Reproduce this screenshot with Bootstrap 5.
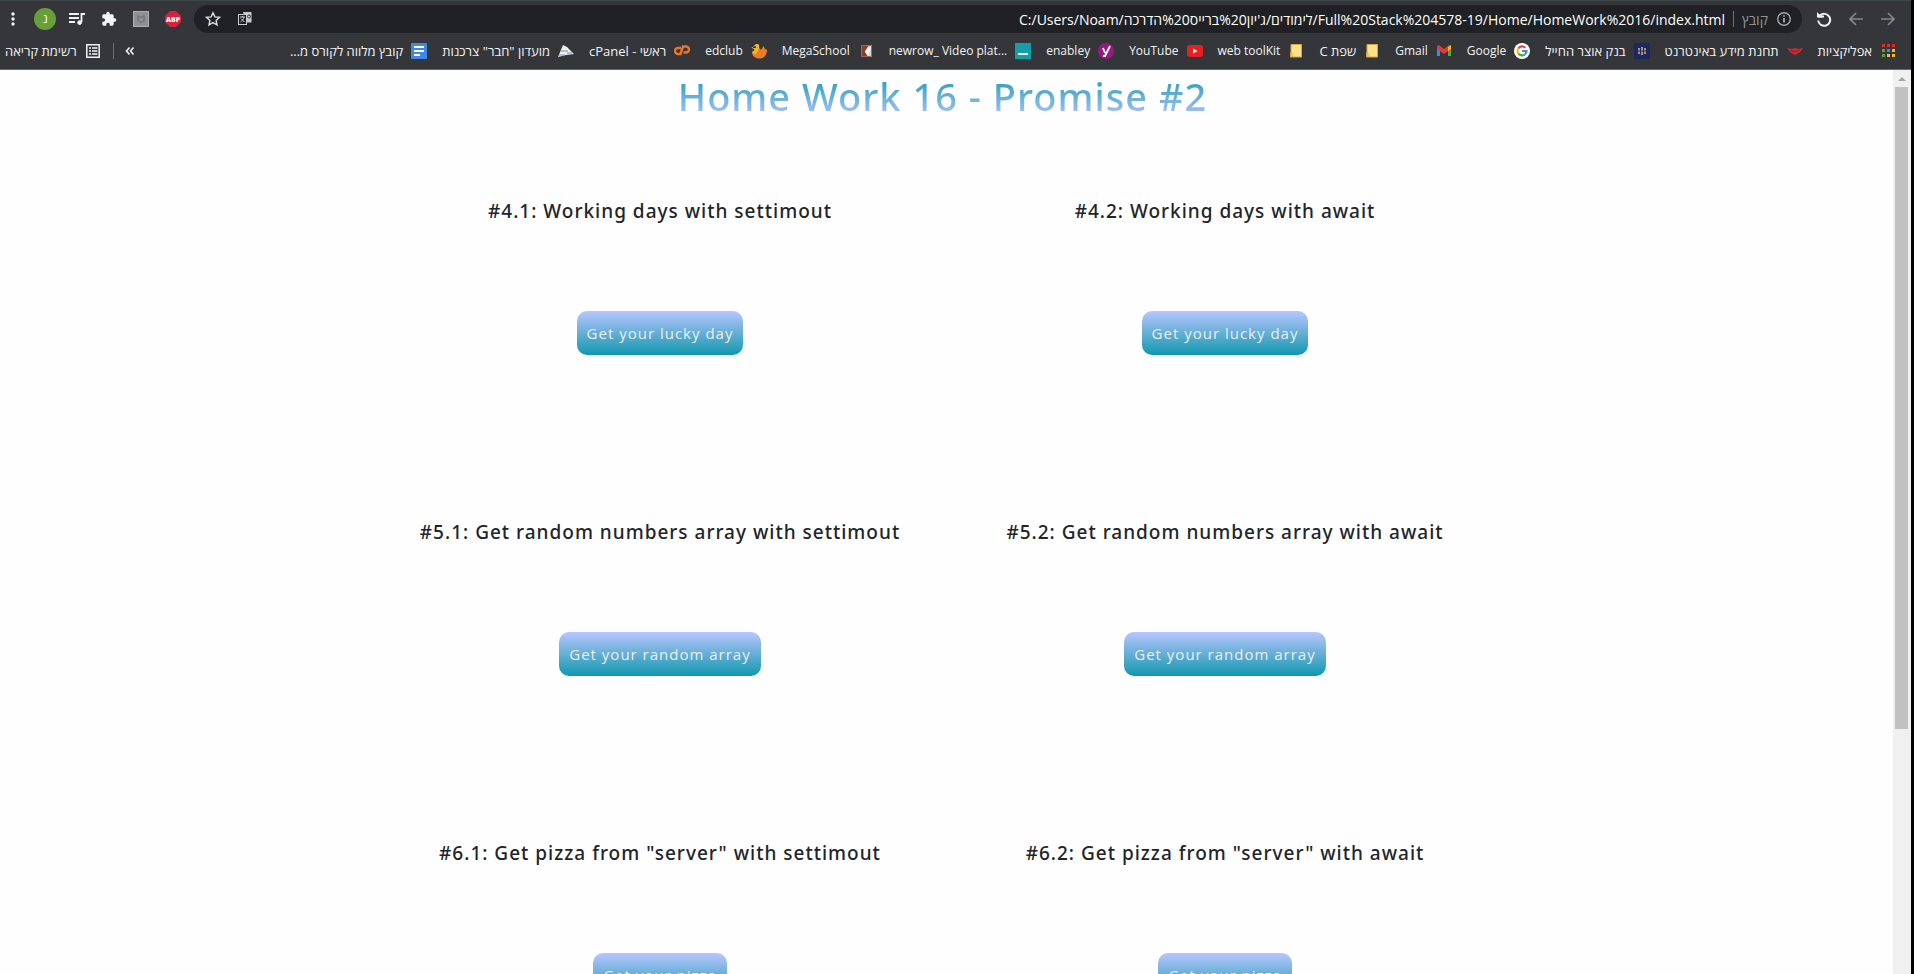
<!DOCTYPE html>
<html lang="en">
<head>
<meta charset="utf-8">
<meta name="viewport" content="width=device-width, initial-scale=1">
<title>Home Work 16 - Promise #2</title>
<link href="https://cdn.jsdelivr.net/npm/bootstrap@5.3.0/dist/css/bootstrap.min.css" rel="stylesheet">
<style>
  body { font-family: "Open Sans", "Noto Sans", "DejaVu Sans", sans-serif; background: #000; }
  .browser { height: 100vh; padding-right: 3px; }
  .chrome-bar { background: #35363a; border-top: 1px solid #3c4649; border-bottom: 1px solid #68696c; color: #f1f3f4; }
  .toolbar { height: 36px; padding: 0 15px 0 5px; gap: 16px; }
  .tool { width: 16px; height: 22px; padding: 0; border: 0; background: none; color: inherit; display: flex; align-items: center; justify-content: center; flex: none; }
  .tool.dim { color: #85888b; }
  .tool svg, .mark-link svg { display: block; flex: none; }
  .address { height: 28px; background: #202124; padding: 0 10px 0 11px; margin-right: -2px; margin-left: -3px; }
  .address input { background: none; border: 0; outline: 0; color: #fff; font-size: 14px; padding: 0; text-align: right; min-width: 0; }
  .address label { font-size: 14px; color: #8f9396; }
  .split { width: 1px; height: 16px; background: #6d7073; flex: none; }
  .marks { height: 32px; font-size: 12px; line-height: 16px; padding: 0 15px 4px 5px; }
  .mark-link { display: flex; align-items: center; gap: 8px; color: #f1f3f4; text-decoration: none; white-space: nowrap; }
  .mark-link:lang(he) { font-size: 13px; }
  .mark-list { gap: 15px; }
  .page { background: #fefefe; padding-right: 8px; }
  .page-title, .task h2 { font-family: "Noto Sans", "Open Sans", sans-serif; font-weight: 500; letter-spacing: 1px; }
  .page-title { font-size: 38px; line-height: 48px; background: linear-gradient(#1198ae, #b8c6ff); -webkit-background-clip: text; background-clip: text; color: transparent; margin: 2px 0 0; }
  .tasks { max-width: 1130px; padding-top: 79px; }
  .task { height: 321px; }
  .task h2 { font-size: 19px; line-height: 24px; margin: 0 0 88px; color: #212529; white-space: nowrap; }
  .btn-task { font-size: 15px; line-height: 24px; letter-spacing: 1px; padding: 10px; border: 0; border-radius: 10px; color: #eee; background: linear-gradient(#b8c6ff, #1198ae); }
  .scroller { width: 18px; background: #f0f0f0; padding: 0 3px 0 2px; }
  .scroll-arrow { height: 17px; }
  .scroll-thumb { height: 71%; background: #c1c1c1; }
</style>
</head>
<body>
<div class="browser d-flex flex-column overflow-hidden">
  <header class="chrome-bar flex-shrink-0">
    <div class="toolbar d-flex align-items-center">
      <button class="tool" aria-label="Menu"><svg width="16" height="16" fill="currentColor"><circle cx="8" cy="3" r="1.7"/><circle cx="8" cy="8" r="1.7"/><circle cx="8" cy="13" r="1.7"/></svg></button>
      <button class="tool" aria-label="Profile"><svg width="22" height="22"><circle cx="11" cy="11" r="11" fill="#689f38"/><text x="11" y="15" font-size="12" fill="#fff" text-anchor="middle">נ</text></svg></button>
      <button class="tool" aria-label="Media"><svg width="18" height="16" fill="none" stroke="currentColor" stroke-width="1.8"><path d="M1 3h10M1 7h10M1 11h6M17 3h-3.5v8"/><circle cx="11.6" cy="11.6" r="1.9" fill="currentColor" stroke-width="1"/></svg></button>
      <button class="tool" aria-label="Extensions"><svg width="16" height="16" viewBox="0 0 24 24" fill="currentColor"><path d="M20.5 11H19V7a2 2 0 0 0-2-2h-4V3.500a2.500 2.500 0 0 0-5 0V5H4a2 2 0 0 0-2 2v3.800h1.500a2.700 2.700 0 0 1 0 5.400H2V20a2 2 0 0 0 2 2h3.800v-1.500a2.700 2.700 0 0 1 5.400 0V22H17a2 2 0 0 0 2-2v-4h1.500a2.500 2.500 0 0 0 0-5z"/></svg></button>
      <button class="tool" aria-label="Shield"><svg width="16" height="16"><rect x=".5" y=".5" width="15" height="15" fill="#909193" stroke="#a9adb5"/><path d="M5 5l2 1h2l2-1v4.500l-3 2-3-2z" fill="none" stroke="#73767c" stroke-width="1.500"/></svg></button>
      <button class="tool" aria-label="Adblock"><svg width="16" height="16"><path d="M5 0h6l5 5v6l-5 5H5l-5-5V5z" fill="#d9203c"/><text x="8" y="10.700" font-size="7" font-weight="800" fill="#fff" text-anchor="middle">ABP</text></svg></button>
      <div class="address d-flex align-items-center rounded-pill flex-grow-1">
        <button class="tool" aria-label="Bookmark"><svg width="16" height="16" fill="none" stroke="#dcdee0" stroke-width="1.400"><path d="M8 1.800l1.900 4.100 4.500.5-3.300 3 .9 4.400L8 11.600l-4 2.200.9-4.400-3.300-3 4.500-.5z"/></svg></button>
        <button class="tool ms-3" aria-label="Translate"><svg width="16" height="16"><path d="M6 1h8.500v10.500H9z" fill="#c8cacc"/><rect x="1.500" y="3.500" width="8" height="10" fill="#202124" stroke="#c8cacc"/><path d="M3 6h5M5.500 5v1M7 6c-.5 2.500-2 4-3.500 5M4 7.500l3.500 3.500" stroke="#c8cacc" fill="none"/><circle cx="12" cy="5.500" r="1.500" fill="none" stroke="#36373b"/></svg></button>
        <input class="flex-grow-1 mx-2" id="url" dir="ltr" type="text" value="C:/Users/Noam/לימודים/ג'יון%20ברייס%20הדרכה/Full%20Stack%204578-19/Home/HomeWork%2016/index.html">
        <span class="split me-2"></span>
        <label for="url" class="me-2">קובץ</label>
        <button class="tool dim" aria-label="Site information"><svg width="16" height="16" fill="none" stroke="#a5a8ab" stroke-width="1.400"><circle cx="8" cy="8" r="6.300"/><path d="M8 7v4.500M8 4.300v1.500" stroke-width="1.800"/></svg></button>
      </div>
      <button class="tool" aria-label="Reload"><svg width="16" height="16" fill="none" stroke="currentColor" stroke-width="2"><path d="M2.500 5.500H8M4 4.500a6 6 0 1 1-1.800 5"/><path d="M1 1l5.500 5.500H1z" fill="currentColor" stroke="none"/></svg></button>
      <button class="tool dim" aria-label="Back"><svg width="16" height="16" fill="none" stroke="currentColor" stroke-width="1.700"><path d="M15 8H2M8 2L2 8l6 6"/></svg></button>
      <button class="tool dim" aria-label="Forward"><svg width="16" height="16" fill="none" stroke="currentColor" stroke-width="1.700"><path d="M1 8h13M8 2l6 6-6 6"/></svg></button>
    </div>
    <nav class="marks d-flex align-items-center justify-content-between" dir="rtl" aria-label="Bookmarks">
      <div class="mark-list d-flex">
        <a class="mark-link" lang="he" href="#"><svg width="16" height="16"><path d="M2 1h3v3H2zM7 1h3v3H7zM12 1h3v3h-3z" fill="#e8281f"/><path d="M2 6h3v3H2zM2 11h3v3H2z" fill="#5fa03c"/><path d="M7 6h3v3H7z" fill="#4285f4"/><path d="M12 6h3v3h-3zM7 11h3v3H7zM12 11h3v3h-3z" fill="#f5b62b"/></svg>אפליקציות</a>
        <a class="mark-link" lang="he" href="#"><svg width="16" height="16"><path d="M0 5l5 1 3-1 3 1 5-1-3 4-5 3-5-3z" fill="#d8282f"/><path d="M3 7l5 2 5-2" stroke="#8e1f25" fill="none"/></svg>תחנת מידע באינטרנט</a>
        <a class="mark-link" lang="he" href="#"><svg width="16" height="16"><path d="M0 0h16v16H0z" fill="#1d2760"/><path d="M5 5v6M8 4v8M11 5v6" stroke="#d9b98b" stroke-width="1.500"/><path d="M4 8h8" stroke="#1d2760"/></svg>בנק אוצר החייל</a>
        <a class="mark-link" href="#"><svg width="16" height="16"><circle cx="8" cy="8" r="8" fill="#fff"/><g fill="none" stroke-width="2.200"><path d="M4.300 5.500A4.500 4.500 0 0 1 11.300 4.800" stroke="#ea4335"/><path d="M4.300 5.500a4.500 4.500 0 0 0 0 5" stroke="#fbbc05"/><path d="M4.300 10.500a4.500 4.500 0 0 0 6.500 1" stroke="#34a853"/><path d="M10.800 11.500A4.500 4.500 0 0 0 12.500 8H8" stroke="#4285f4"/></g></svg>Google</a>
        <a class="mark-link" href="#"><svg width="16" height="16"><path d="M1 4v9h3V6z" fill="#4285f4"/><path d="M15 4v9h-3V6z" fill="#5fa544"/><path d="M1 3l2-1 5 4 5-4 2 1v3l-7 5-7-5z" fill="#e33b2e"/><path d="M12 4l3-2v4l-3 2z" fill="#f5b62b"/></svg>Gmail</a>
        <a class="mark-link" lang="he" href="#"><svg width="16" height="16"><path d="M3 1.500h10.500v12.500H2.500v-4H3z" fill="#fedf8c" stroke="#d9a93c"/><path d="M2 10h2v4" fill="none" stroke="#d9a93c"/></svg>שפת C</a>
        <a class="mark-link" href="#"><svg width="16" height="16"><path d="M3 1.500h10.500v12.500H2.500v-4H3z" fill="#fedf8c" stroke="#d9a93c"/><path d="M2 10h2v4" fill="none" stroke="#d9a93c"/></svg>web toolKit</a>
        <a class="mark-link" href="#"><svg width="16" height="16"><rect y="2" width="16" height="12" rx="3" fill="#e62020"/><path d="M6 5.500l4.500 2.500L6 10.500z" fill="#fff"/></svg>YouTube</a>
        <a class="mark-link" href="#"><svg width="16" height="16"><circle cx="8" cy="8" r="8" fill="#941b80"/><path d="M5 5l2 5M12 3L7 13H5" fill="none" stroke="#fff" stroke-width="1.800"/></svg>enabley</a>
        <a class="mark-link" href="#"><svg width="16" height="16"><path d="M0 0h16v16H0z" fill="#129fa8"/><path d="M3 10h10v2H3z" fill="#fff"/></svg><bdi dir="ltr">newrow_ Video plat...</bdi></a>
        <a class="mark-link" href="#"><svg width="16" height="16"><path d="M3 2h11v12H3z" fill="#d8d8d8"/><path d="M3 2h8L7 8l3 6H3z" fill="#8d3d2c"/><path d="M13 3L7 9l3 4z" fill="#fff"/><path d="M3.500 2.500h10v11h-10z" fill="none" stroke="#9a6a5c"/></svg>MegaSchool</a>
        <a class="mark-link" href="#"><svg width="16" height="16"><path d="M6 1c2 0 2.500 1.500 2 3.500L10 7l2.500-4 1.500 3 2 1c0 5-3 8.500-7.500 8.500S1 13 1 9l3-2-3.500-2.500L3 3.500C3.500 2 4.500 1 6 1z" fill="#ea7c28"/><path d="M6 1c2 0 2.500 1.500 2 3.500L7 8l-3 4-3-3 3-2-3.500-2.500L3 3.500C3.500 2 4.500 1 6 1z" fill="#f2b52e"/><path d="M2 4.500l3-.5" stroke="#3a2a20" stroke-width="1.500"/></svg>edclub</a>
        <a class="mark-link" lang="he" href="#"><svg width="16" height="16" fill="none" stroke="#e8752a" stroke-width="2.400"><path d="M7 5H4a3 3 0 0 0 0 6h2.500L9 3.500h3a3 3 0 0 1 0 6H9.500"/></svg>ראשי - cPanel</a>
        <a class="mark-link" lang="he" href="#"><svg width="16" height="16"><path d="M5 2l4 2 7 7-8 1-8 2z" fill="#eef1f4"/><path d="M3 8h7M9 10h5M1 12h6" stroke="#7793b5" stroke-width="1.200"/></svg>מועדון "חבר" צרכנות</a>
        <a class="mark-link" lang="he" href="#"><svg width="16" height="16"><rect width="16" height="16" rx="1" fill="#4089e8"/><path d="M3 4h10M3 8h10M3 12h6" stroke="#fff" stroke-width="1.800"/></svg>קובץ מלווה לקורס מ...</a>
      </div>
      <div class="d-flex align-items-center">
        <button class="tool" aria-label="More bookmarks"><svg width="10" height="10" fill="none" stroke="currentColor" stroke-width="1.600"><path d="M4.500 1.500L1.500 5l3 3.500M8.500 1.500L5.500 5l3 3.500"/></svg></button>
        <span class="split mx-2"></span>
        <a class="mark-link pe-1" lang="he" href="#"><svg width="16" height="16" fill="none" stroke="currentColor" stroke-width="1.500"><path d="M1.800 1.800h12.400v12.400H1.800zM4 5h2M7 5h5.500M4 8h2M7 8h5.500M4 11h2M7 11h5.500"/></svg>רשימת קריאה</a>
      </div>
    </nav>
  </header>
  <div class="d-flex flex-grow-1 overflow-hidden">
    <main class="page flex-grow-1 overflow-hidden text-center">
      <h1 class="page-title">Home Work 16 - Promise #2</h1>
      <div class="tasks container-fluid px-0">
        <div class="row g-0">
          <section class="task col-6"><h2>#4.1: Working days with settimout</h2><button class="btn btn-task">Get your lucky day</button></section>
          <section class="task col-6"><h2>#4.2: Working days with await</h2><button class="btn btn-task">Get your lucky day</button></section>
          <section class="task col-6"><h2>#5.1: Get random numbers array with settimout</h2><button class="btn btn-task">Get your random array</button></section>
          <section class="task col-6"><h2>#5.2: Get random numbers array with await</h2><button class="btn btn-task">Get your random array</button></section>
          <section class="task col-6"><h2>#6.1: Get pizza from "server" with settimout</h2><button class="btn btn-task">Get your pizza</button></section>
          <section class="task col-6"><h2>#6.2: Get pizza from "server" with await</h2><button class="btn btn-task">Get your pizza</button></section>
        </div>
      </div>
    </main>
    <div class="scroller flex-shrink-0" aria-hidden="true">
      <div class="scroll-arrow d-flex align-items-center justify-content-center"><svg width="8" height="4"><path d="M4 0l4 4H0z" fill="#a3a3a8"/></svg></div>
      <div class="scroll-thumb"></div>
    </div>
  </div>
</div>
<script src="https://cdn.jsdelivr.net/npm/bootstrap@5.3.0/dist/js/bootstrap.bundle.min.js"></script>
</body>
</html>
